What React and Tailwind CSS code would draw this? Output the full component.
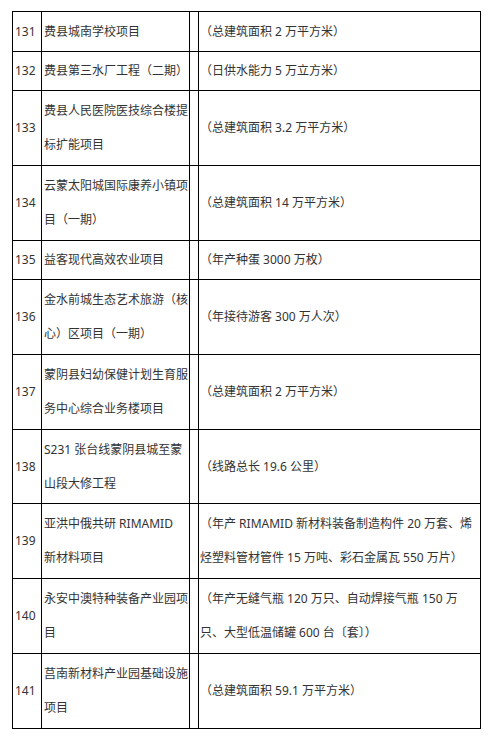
import React from "react";

const rows = [
  { n: "131", h: "h-[40px]", a: ["费县城南学校项目"], b: ["（总建筑面积 2 万平方米）"] },
  { n: "132", h: "h-[39px]", a: ["费县第三水厂工程（二期）"], b: ["（日供水能力 5 万立方米）"] },
  { n: "133", h: "h-[75px]", a: ["费县人民医院医技综合楼提", "标扩能项目"], b: ["（总建筑面积 3.2 万平方米）"] },
  { n: "134", h: "h-[75px]", a: ["云蒙太阳城国际康养小镇项", "目（一期）"], b: ["（总建筑面积 14 万平方米）"] },
  { n: "135", h: "h-[39px]", a: ["益客现代高效农业项目"], b: ["（年产种蛋 3000 万枚）"] },
  { n: "136", h: "h-[75px]", a: ["金水前城生态艺术旅游（核", "心）区项目（一期）"], b: ["（年接待游客 300 万人次）"] },
  { n: "137", h: "h-[75px]", a: ["蒙阴县妇幼保健计划生育服", "务中心综合业务楼项目"], b: ["（总建筑面积 2 万平方米）"] },
  { n: "138", h: "h-[74px]", a: ["S231 张台线蒙阴县城至蒙", "山段大修工程"], b: ["（线路总长 19.6 公里）"] },
  { n: "139", h: "h-[75px]", a: ["亚洪中俄共研 RIMAMID", "新材料项目"], b: ["（年产 RIMAMID 新材料装备制造构件 20 万套、烯", "烃塑料管材管件 15 万吨、彩石金属瓦 550 万片）"] },
  { n: "140", h: "h-[75px]", a: ["永安中澳特种装备产业园项", "目"], b: ["（年产无缝气瓶 120 万只、自动焊接气瓶 150 万", "只、大型低温储罐 600 台〔套〕）"] },
  { n: "141", h: "h-[75px]", a: ["莒南新材料产业园基础设施", "项目"], b: ["（总建筑面积 59.1 万平方米）"] },
];

export default function App() {
  return (
    <div
      className="bg-white w-[494px] h-[742px] pt-[11px] pl-[12px] text-[12px] leading-[34px] text-[#333333]"
      style={{ fontFamily: '"Noto Sans", "Noto Sans CJK SC", sans-serif' }}
    >
      <div className="w-[469px] border-l border-t border-black">
        {rows.map((r) => (
          <div key={r.n} className={`flex border-b border-black ${r.h}`}>
            <div className="w-[29px] shrink-0 border-r border-black flex items-center pl-[2px] whitespace-nowrap">
              {r.n}
            </div>
            <div className="w-[148px] shrink-0 border-r border-black flex flex-col justify-center pl-[2px] whitespace-nowrap">
              {r.a.map((t, i) => (
                <div key={i}>{t}</div>
              ))}
            </div>
            <div className="w-[9px] shrink-0 border-r border-black" />
            <div className="w-[282px] shrink-0 border-r border-black flex flex-col justify-center pl-[1px] whitespace-nowrap">
              {r.b.map((t, i) => (
                <div key={i}>{t}</div>
              ))}
            </div>
          </div>
        ))}
      </div>
    </div>
  );
}
